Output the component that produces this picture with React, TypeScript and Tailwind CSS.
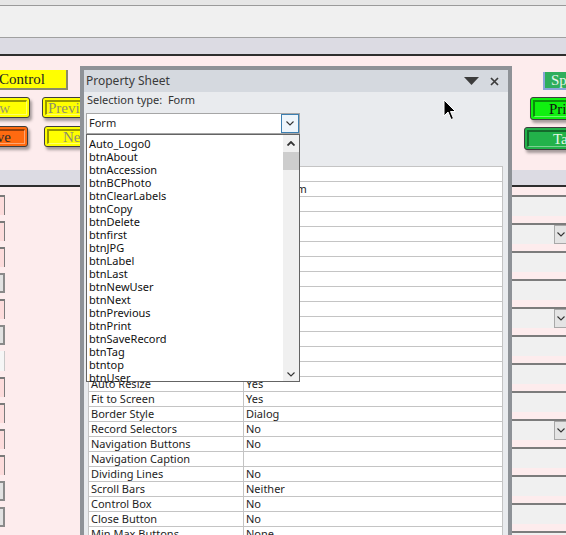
import React from 'react';

// --- DATA ---
const LIST_ITEMS = [
  'Auto_Logo0', 'btnAbout', 'btnAccession', 'btnBCPhoto', 'btnClearLabels', 'btnCopy',
  'btnDelete', 'btnfirst', 'btnJPG', 'btnLabel', 'btnLast', 'btnNewUser', 'btnNext',
  'btnPrevious', 'btnPrint', 'btnSaveRecord', 'btnTag', 'btntop', 'btnUser',
];

const PROPS: [string, string][] = [
  ['Record Source', ''],
  ['Caption', 'Photo Form'],
  ['Pop Up', 'Yes'],
  ['Modal', 'Yes'],
  ['Default View', 'Single'],
  ['Allow Form View', 'Yes'],
  ['Allow Datasheet View', 'No'],
  ['Allow Layout View', 'No'],
  ['Picture Type', 'Linked'],
  ['Picture', '(none)'],
  ['Picture Tiling', 'No'],
  ['Picture Alignment', 'Center'],
  ['Picture Size Mode', 'Clip'],
  ['Auto Center', 'Yes'],
  ['Auto Resize', 'Yes'],
  ['Fit to Screen', 'Yes'],
  ['Border Style', 'Dialog'],
  ['Record Selectors', 'No'],
  ['Navigation Buttons', 'No'],
  ['Navigation Caption', ''],
  ['Dividing Lines', 'No'],
  ['Scroll Bars', 'Neither'],
  ['Control Box', 'No'],
  ['Close Button', 'No'],
  ['Min Max Buttons', 'None'],
];

// left edge fields: p = pink, g = gray, w = white
const LEFT_FIELDS = ['p', 'p', 'p', 'g', 'p', 'g', 'w', 'p', 'p', 'p', 'p', 'g', 'g'];
// right edge fields, true = has a combo arrow
const RIGHT_FIELDS = [false, true, false, false, true, false, false, false, true, false, false, false, false];

// --- SMALL PIECES ---
const Chevron = ({ up = false, className = '' }: { up?: boolean; className?: string }) => (
  <svg width="8" height="5" viewBox="0 0 8 5" className={className}>
    <polyline
      points={up ? '0.5,4.5 4,1 7.5,4.5' : '0.5,0.5 4,4 7.5,0.5'}
      fill="none"
      stroke="#333"
      strokeWidth={up ? 1.8 : 1.1}
    />
  </svg>
);

const Bevel = ({ outer, inner, children }: { outer: string; inner: string; children: React.ReactNode }) => (
  <div className={`rounded-[3px] border border-[#3d3d3d] shadow-[2px_3px_3px_rgba(0,0,0,0.35)] ${outer}`}>
    <div className={`h-[calc(100%-4px)] flex items-center border-t-2 border-l-2 border-r border-b border-t-black/40 border-l-black/40 border-r-white/40 border-b-white/40 m-[2px] font-['Liberation_Serif',serif] text-[15px] leading-none whitespace-nowrap overflow-hidden ${inner}`}>
      {children}
    </div>
  </div>
);

export default function App() {
  return (
    <div className="relative w-[566px] h-[535px] overflow-hidden bg-[#fdeced] font-['Noto_Sans','Open_Sans',sans-serif]">
      {/* window bars */}
      <div className="h-[6px] bg-[#e6e6e6] border-b border-[#9a9a9a]" />
      <div className="h-[32px] bg-[#f0f0f0] border-b border-[#a0a0a0]" />
      <div className="h-[18px] bg-[#dcdbe3] border-b-2 border-[#2e2e2e]" />

      {/* form header: buttons */}
      <div className="h-[114px] flex justify-between">
        <div className="w-[80px] overflow-hidden pt-[14px]">
          <div className="ml-[-6px] w-[74px] h-[20px] bg-[#ffff00] border-r-2 border-b-2 border-[#8a8a6a] pl-[5px] flex items-center font-['Liberation_Serif',serif] text-[15px] text-[#222]">
            Control
          </div>
          <div className="flex mt-[7px]">
            <div className="shrink-0 ml-[-34px] w-[64px] h-[21px]">
              <Bevel outer="bg-[#ffff00] h-[21px]" inner="justify-end pr-[16px] text-[#9a9a6a]">w</Bevel>
            </div>
            <div className="shrink-0 ml-[12px] w-[74px] h-[21px]">
              <Bevel outer="bg-[#ffff00] h-[21px]" inner="pl-[1px] text-[#8e8e6e]">Previous</Bevel>
            </div>
          </div>
          <div className="flex mt-[8px]">
            <div className="shrink-0 ml-[-34px] w-[62px] h-[21px]">
              <Bevel outer="bg-[#ff6a10] h-[21px]" inner="justify-end pr-[13px] text-[#2a2a2a]">ve</Bevel>
            </div>
            <div className="shrink-0 ml-[16px] w-[70px] h-[21px]">
              <Bevel outer="bg-[#ffff00] h-[21px]" inner="pl-[14px] text-[#8e8e6e]">Next</Bevel>
            </div>
          </div>
        </div>

        <div className="w-[54px] overflow-hidden pt-[16px]">
          <div className="ml-[31px] w-[60px] h-[18px] bg-[#2fae5c] border-b-2 border-l-2 border-[#8aa4d8] pl-[6px] flex items-center font-['Liberation_Serif',serif] text-[15px] text-[#e8f4ea] whitespace-nowrap">
            Speed
          </div>
          <div className="ml-[18px] w-[60px] h-[23px] mt-[7px]">
            <Bevel outer="bg-[#10f010] h-[23px]" inner="pl-[14px] text-[#111]">Print</Bevel>
          </div>
          <div className="ml-[12px] w-[60px] h-[23px] mt-[7px]">
            <Bevel outer="bg-[#22b24a] h-[23px]" inner="pl-[24px] text-[#e6f6e6]">Tag</Bevel>
          </div>
        </div>
      </div>

      {/* section band */}
      <div className="h-[17px] bg-[#dcdbe3] border-b-2 border-[#2e2e2e]" />

      {/* detail fields */}
      <div className="flex justify-between pt-[8px]">
        <div className="w-[80px] flex flex-col gap-[6px]">
          {LEFT_FIELDS.map((f, i) => (
            <div
              key={i}
              className={
                f === 'p'
                  ? 'w-[5px] h-[20px] bg-[#fcdcdc] border-t-2 border-r border-[#7a7a7a]'
                  : f === 'g'
                  ? 'w-[5px] h-[20px] bg-[#e2e2e2] border-2 border-l-0 border-[#8a8a8a]'
                  : 'w-[5px] h-[20px] bg-[#f6f6f6] border-r border-[#c8c8c8]'
              }
            />
          ))}
        </div>
        <div className="w-[54px] flex flex-col gap-[7px]">
          {RIGHT_FIELDS.map((combo, i) => (
            <div key={i} className="h-[21px] bg-[#f0f0f0] border-t-2 border-[#7c7c7c] flex justify-end items-start">
              {combo && (
                <div className="w-[12px] h-[19px] bg-[#e4e4e4] border border-[#a8a8a8] border-r-0 flex items-center justify-center">
                  <Chevron />
                </div>
              )}
            </div>
          ))}
        </div>
      </div>

      {/* Property Sheet (floating) */}
      <div className="absolute left-[80px] top-[66px] w-[432px] h-[480px] border-4 border-b-0 border-[#8e9297] bg-[#e9ebee]">
        <div className="h-[22px] bg-[#d5d9df] flex items-center justify-between pl-[2px] pr-[9px] text-[12px] text-[#3a3a3a]">
          <span>Property Sheet</span>
          <div className="flex items-center gap-[11px]">
            <svg width="15" height="8" viewBox="0 0 15 8">
              <polygon points="0,0 15,0 7.5,8" fill="#3c3c3c" />
            </svg>
            <svg width="9" height="9" viewBox="0 0 9 9">
              <path d="M1 1 L8 8 M8 1 L1 8" stroke="#3c3c3c" strokeWidth="1.7" />
            </svg>
          </div>
        </div>
        <div className="h-[16px] pl-[3px] flex items-center text-[11px] text-[#333] whitespace-pre">
          Selection type:  Form
        </div>

        <div className="mt-[5px] ml-[2px] w-[214px] h-[21px] bg-white border border-[#a6a6a6] flex items-center justify-between pl-[2px]">
          <span className="text-[11px] text-[#1e1e1e]">Form</span>
          <div className="w-[18px] h-[19px] border border-[#3c7fb1] bg-[#eef5fb] flex items-center justify-center">
            <Chevron />
          </div>
        </div>

        {/* property grid */}
        <div className="mt-[32px] ml-[4px] w-[415px] bg-white border-t border-l border-r border-[#c4c4c4]">
          {PROPS.map(([name, value]) => (
            <div key={name} className="grid grid-cols-[155px_1fr] h-[15px] border-b border-[#c4c4c4] text-[11px] leading-[14px] text-[#1e1e1e]">
              <div className="pl-[2px] border-r border-[#c4c4c4] whitespace-nowrap overflow-hidden">{name}</div>
              <div className="pl-[2px] whitespace-nowrap overflow-hidden">{value}</div>
            </div>
          ))}
        </div>

        {/* open combo list */}
        <div className="absolute left-[2px] top-[64px] w-[214px] h-[248px] bg-white border border-[#646464] flex">
          <div className="flex-1 pt-[2px] pl-[2px] text-[11px] leading-[13px] text-[#111]">
            {LIST_ITEMS.map((item) => (
              <div key={item}>{item}</div>
            ))}
          </div>
          <div className="w-[16px] bg-[#f0f0f0] flex flex-col">
            <div className="h-[17px] flex items-center justify-center">
              <Chevron up />
            </div>
            <div className="h-[18px] bg-[#cdcdcd]" />
            <div className="flex-1" />
            <div className="h-[14px] flex items-center justify-center">
              <Chevron />
            </div>
          </div>
        </div>
      </div>

      {/* mouse pointer */}
      <svg className="absolute left-[443px] top-[99px]" width="14" height="23" viewBox="0 0 14 23">
        <path d="M1 1 L1 17 L5 13 L8 20.5 L10.5 19.5 L7.5 12.5 L12.5 12.5 Z" fill="#000" stroke="#fff" strokeWidth="1" />
      </svg>
    </div>
  );
}
